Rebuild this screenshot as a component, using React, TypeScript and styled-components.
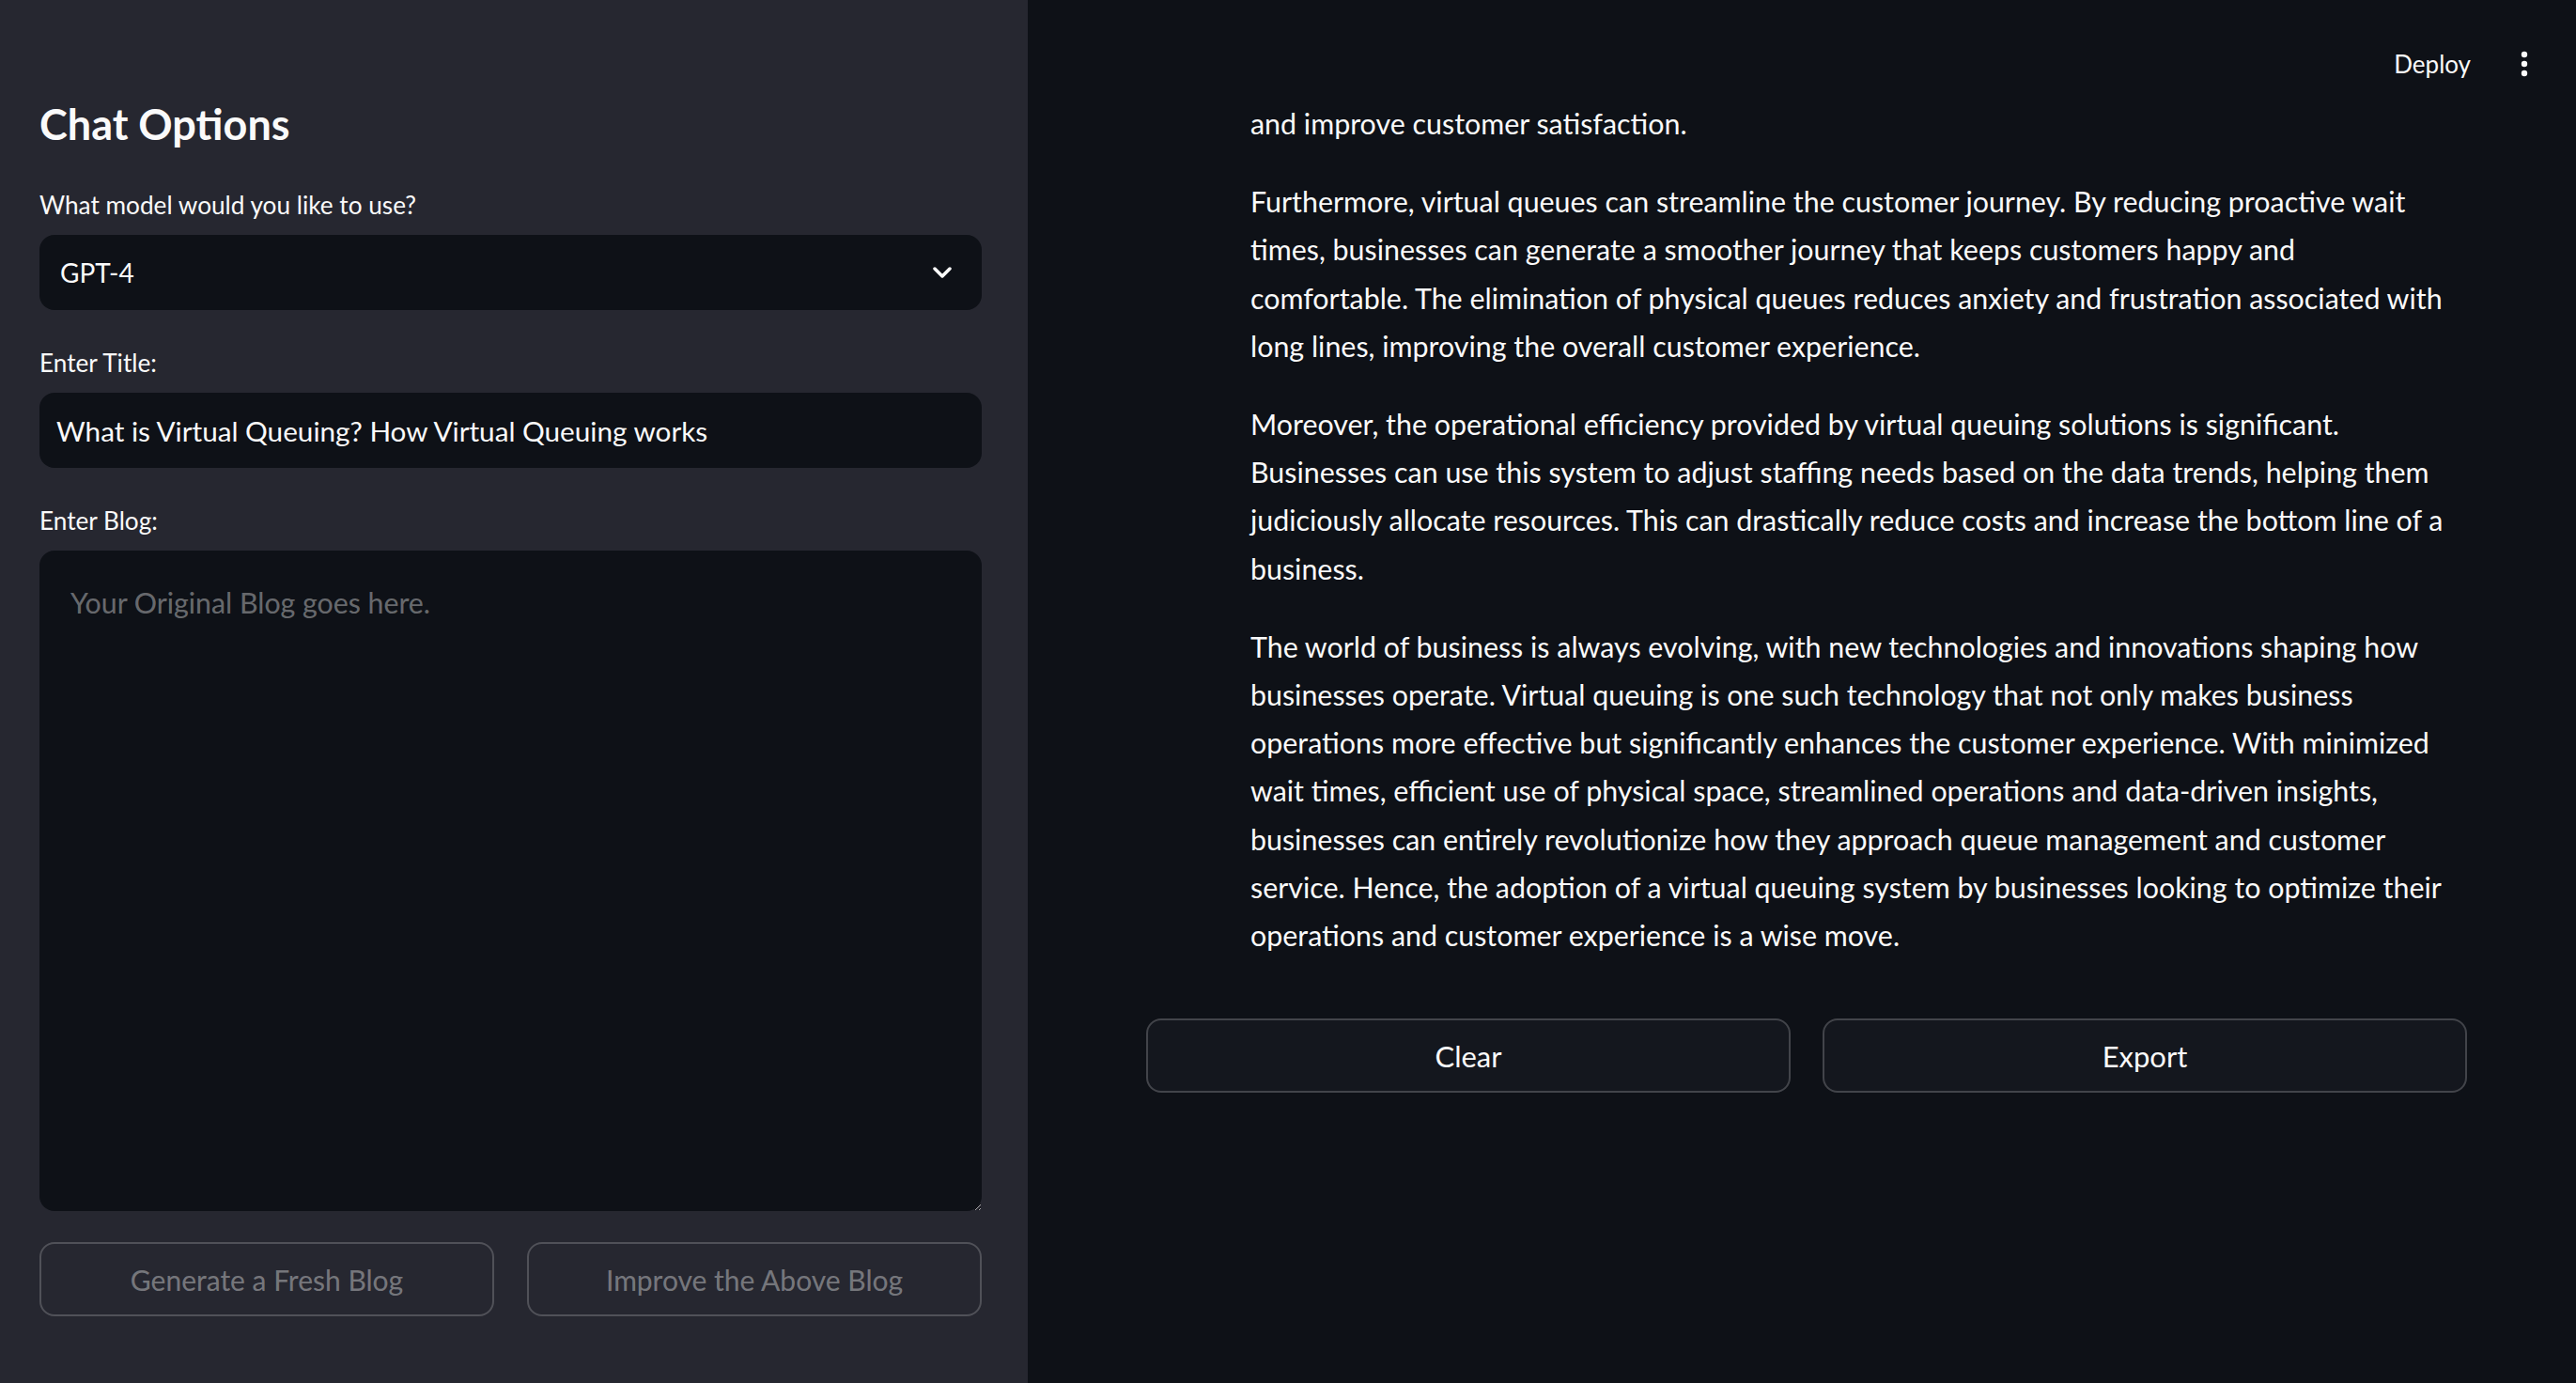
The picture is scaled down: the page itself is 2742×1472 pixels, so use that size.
import styled, { createGlobalStyle } from 'styled-components';

const GlobalStyle = createGlobalStyle`
  html, body {
    margin: 0;
    padding: 0;
    background: #0e1117;
  }
  body {
    font-family: Lato, "Noto Sans", sans-serif;
    color: #fafafa;
    color-scheme: dark;
  }
  * {
    box-sizing: border-box;
  }
`;

const Page = styled.div`
  display: flex;
  width: 2742px;
  height: 1472px;
  overflow: hidden;
`;

/* ---------- sidebar ---------- */

const Sidebar = styled.aside`
  width: 1094px;
  flex-shrink: 0;
  background: #262730;
  padding: 104px 49px 0 42px;
  display: flex;
  flex-direction: column;
`;

const Heading = styled.h2`
  margin: 0 0 38px;
  font-size: 45px;
  line-height: 56px;
  font-weight: 700;
`;

const Field = styled.div<{ $last?: boolean }>`
  display: flex;
  flex-direction: column;
  gap: 15px;
  margin-bottom: ${(p) => (p.$last ? '33px' : '36px')};
`;

const Label = styled.label`
  padding-top: 3px;
  font-size: 26.2px;
  line-height: 34px;
`;

const SelectBox = styled.div`
  height: 80px;
  border-radius: 16px;
  background: #0e1117;
  display: flex;
  align-items: center;
  justify-content: space-between;
  padding: 0 32px 0 22px;
  font-size: 28px;
`;

const TextInput = styled.input`
  height: 80px;
  width: 100%;
  border: none;
  outline: none;
  border-radius: 16px;
  background: #0e1117;
  color: #fafafa;
  padding: 0 18px;
  font-family: inherit;
  font-size: 29.7px;
`;

const TextArea = styled.textarea`
  height: 703px;
  width: 100%;
  border: none;
  outline: none;
  border-radius: 16px;
  background: #0e1117;
  color: #fafafa;
  padding: 30px 33px;
  font-family: inherit;
  font-size: 30.3px;
  line-height: 51.2px;
  resize: vertical;
  &::placeholder {
    color: rgba(250, 250, 250, 0.4);
  }
`;

const ButtonRow = styled.div<{ $gap: number }>`
  display: grid;
  grid-template-columns: 1fr 1fr;
  gap: ${(p) => p.$gap}px;
`;

const Button = styled.button<{ $disabled?: boolean }>`
  height: 79px;
  border-radius: 16px;
  border: 2px solid rgba(250, 250, 250, 0.2);
  background: ${(p) => (p.$disabled ? 'transparent' : '#14171e')};
  color: ${(p) => (p.$disabled ? 'rgba(250, 250, 250, 0.4)' : '#fafafa')};
  font-family: inherit;
  font-size: ${(p) => (p.$disabled ? '30px' : '31px')};
  cursor: ${(p) => (p.$disabled ? 'not-allowed' : 'pointer')};
`;

/* ---------- main ---------- */

const Main = styled.main`
  flex: 1;
  display: flex;
  flex-direction: column;
`;

const TopBar = styled.header`
  height: 106px;
  display: flex;
  justify-content: flex-end;
  align-items: flex-start;
  gap: 53px;
  padding: 50px 51px 0 0;
`;

const DeployButton = styled.span`
  font-size: 26px;
  line-height: 36px;
`;

const MenuDots = styled.div`
  height: 36px;
  display: flex;
  align-items: center;
`;

const Content = styled.div`
  padding: 0 116px 0 126px;
`;

const ChatMessage = styled.div`
  padding: 0 14px 0 111px;
`;

const Paragraph = styled.p`
  margin: 0 0 32px;
  font-size: 30.4px;
  line-height: 51.2px;
`;

const Actions = styled.div`
  margin-top: 63px;
`;

function Chevron() {
  return (
    <svg width="20" height="12" viewBox="0 0 20 12" fill="none">
      <polyline points="2,2 10,10 18,2" stroke="#fafafa" strokeWidth="3.5" strokeLinecap="round" strokeLinejoin="round" />
    </svg>
  );
}

function VerticalDots() {
  return (
    <svg width="8" height="28" viewBox="0 0 8 28">
      <circle cx="4" cy="4" r="3.2" fill="#fafafa" />
      <circle cx="4" cy="14" r="3.2" fill="#fafafa" />
      <circle cx="4" cy="24" r="3.2" fill="#fafafa" />
    </svg>
  );
}

const paragraphs = [
  'and improve customer satisfaction.',
  'Furthermore, virtual queues can streamline the customer journey. By reducing proactive wait times, businesses can generate a smoother journey that keeps customers happy and comfortable. The elimination of physical queues reduces anxiety and frustration associated with long lines, improving the overall customer experience.',
  'Moreover, the operational efficiency provided by virtual queuing solutions is significant. Businesses can use this system to adjust staffing needs based on the data trends, helping them judiciously allocate resources. This can drastically reduce costs and increase the bottom line of a business.',
  'The world of business is always evolving, with new technologies and innovations shaping how businesses operate. Virtual queuing is one such technology that not only makes business operations more effective but significantly enhances the customer experience. With minimized wait times, efficient use of physical space, streamlined operations and data-driven insights, businesses can entirely revolutionize how they approach queue management and customer service. Hence, the adoption of a virtual queuing system by businesses looking to optimize their operations and customer experience is a wise move.',
];

function App() {
  return (
    <Page>
      <GlobalStyle />
      <Sidebar>
        <Heading>Chat Options</Heading>

        <Field>
          <Label>What model would you like to use?</Label>
          <SelectBox>
            <span>GPT-4</span>
            <Chevron />
          </SelectBox>
        </Field>

        <Field>
          <Label>Enter Title:</Label>
          <TextInput readOnly value="What is Virtual Queuing? How Virtual Queuing works" />
        </Field>

        <Field $last>
          <Label>Enter Blog:</Label>
          <TextArea placeholder="Your Original Blog goes here." />
        </Field>

        <ButtonRow $gap={35}>
          <Button $disabled>Generate a Fresh Blog</Button>
          <Button $disabled>Improve the Above Blog</Button>
        </ButtonRow>
      </Sidebar>

      <Main>
        <TopBar>
          <DeployButton>Deploy</DeployButton>
          <MenuDots>
            <VerticalDots />
          </MenuDots>
        </TopBar>

        <Content>
          <ChatMessage>
            {paragraphs.map((text, i) => (
              <Paragraph key={i}>{text}</Paragraph>
            ))}
          </ChatMessage>

          <Actions>
            <ButtonRow $gap={34}>
              <Button>Clear</Button>
              <Button>Export</Button>
            </ButtonRow>
          </Actions>
        </Content>
      </Main>
    </Page>
  );
}

export default App;
